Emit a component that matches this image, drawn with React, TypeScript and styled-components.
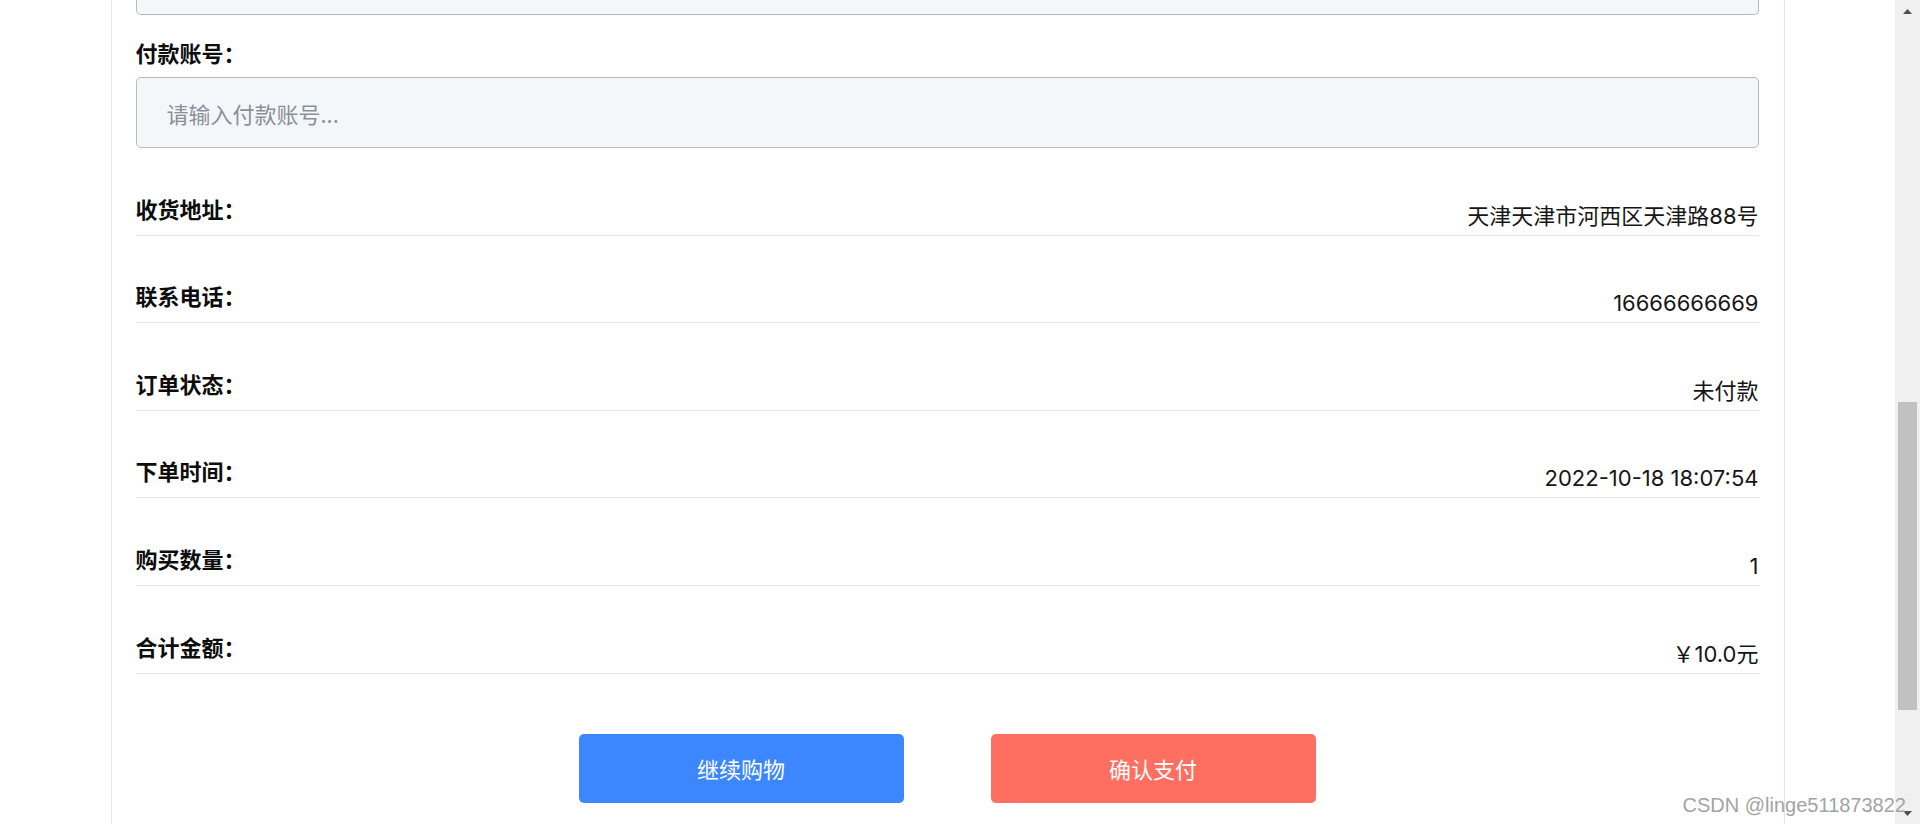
import React from 'react';
import styled, { createGlobalStyle } from 'styled-components';

const GlobalStyle = createGlobalStyle`
  html, body {
    margin: 0;
    padding: 0;
    height: 100%;
    overflow: hidden;
    background: #ffffff;
  }
  body {
    font-family: "Noto Sans CJK SC", sans-serif;
  }
  * {
    box-sizing: border-box;
  }
`;

const Viewport = styled.div`
  position: relative;
  display: flex;
  width: 1920px;
  height: 824px;
  overflow: hidden;
`;

const Page = styled.main`
  flex: 1;
  min-width: 0;
`;

const Panel = styled.section`
  width: 1674px;
  height: 100%;
  margin: 0 auto;
  padding: 0 25px 0 24px;
  border-left: 1px solid #e6e8ec;
  border-right: 1px solid #dfe5ee;
`;

const InputStub = styled.div`
  height: 15px;
  background: #f4f7fa;
  border: 1px solid #b4bac3;
  border-top: none;
  border-radius: 0 0 5px 5px;
`;

const FieldLabel = styled.label`
  display: block;
  margin-top: 22px;
  font: 700 22px/30px "Noto Sans CJK SC", sans-serif;
  color: #0d0d0d;
`;

const TextInput = styled.input`
  display: block;
  width: 100%;
  height: 71px;
  margin-top: 10px;
  padding: 0 30px;
  background: #f4f7fa;
  border: 1px solid #b4bac3;
  border-radius: 5px;
  font: 400 22px "Noto Sans CJK SC", sans-serif;
  color: #333333;
  outline: none;

  &::placeholder {
    color: #8a8f99;
  }
`;

const InfoList = styled.dl`
  margin: 0;
`;

const InfoRow = styled.div`
  display: flex;
  justify-content: space-between;
  align-items: flex-end;
  height: 87.6px;
  padding-bottom: 4px;
  border-bottom: 1px solid #e5e7eb;
`;

const RowLabel = styled.dt`
  margin: 0 0 8px;
  font: 700 22px/30px "Noto Sans CJK SC", sans-serif;
  color: #0d0d0d;
`;

const RowValue = styled.dd`
  margin: 0;
  font: 400 22px/30px Inter, "Noto Sans CJK SC", sans-serif;
  color: #161616;
`;

const Actions = styled.div`
  display: flex;
  justify-content: center;
  gap: 87px;
  padding-top: 60px;
`;

const ActionButton = styled.button<{ $tone: 'primary' | 'danger' }>`
  width: 325px;
  height: 69px;
  border: none;
  border-radius: 5px;
  background: ${(p) => (p.$tone === 'primary' ? '#3d87fe' : '#fe6f62')};
  color: #ffffff;
  font: 400 22px "Noto Sans CJK SC", sans-serif;
  cursor: pointer;
`;

const ScrollBar = styled.div`
  display: flex;
  flex-direction: column;
  width: 25px;
  background: #f0f0f0;
`;

const ScrollArrow = styled.div`
  display: flex;
  align-items: center;
  justify-content: center;
  height: 22px;
`;

const ScrollTrack = styled.div`
  flex: 1;
  padding: 0 3px;
`;

const ScrollThumb = styled.div`
  height: 308px;
  background: #c1c1c1;
`;

const Watermark = styled.div`
  position: absolute;
  right: 14px;
  bottom: 7px;
  font: 400 20px/23px "Liberation Sans", Arial, sans-serif;
  color: #a3a3a3;
  pointer-events: none;
  white-space: nowrap;
`;

const rows: Array<[string, string]> = [
  ['收货地址：', '天津天津市河西区天津路88号'],
  ['联系电话：', '16666666669'],
  ['订单状态：', '未付款'],
  ['下单时间：', '2022-10-18 18:07:54'],
  ['购买数量：', '1'],
  ['合计金额：', '￥10.0元'],
];

const Triangle = ({ up }: { up: boolean }) => (
  <svg width="9" height="5" viewBox="0 0 9 5">
    <path d={up ? 'M0 5 L4.5 0 L9 5 Z' : 'M0 0 L4.5 5 L9 0 Z'} fill="#505050" />
  </svg>
);

export default function App() {
  return (
    <>
      <GlobalStyle />
      <Viewport>
        <Page>
          <Panel>
            <InputStub />
            <FieldLabel htmlFor="pay-account">付款账号：</FieldLabel>
            <TextInput id="pay-account" placeholder="请输入付款账号..." />
            <InfoList>
              {rows.map(([label, value]) => (
                <InfoRow key={label}>
                  <RowLabel>{label}</RowLabel>
                  <RowValue>{value}</RowValue>
                </InfoRow>
              ))}
            </InfoList>
            <Actions>
              <ActionButton $tone="primary">继续购物</ActionButton>
              <ActionButton $tone="danger">确认支付</ActionButton>
            </Actions>
          </Panel>
        </Page>
        <ScrollBar>
          <ScrollArrow>
            <Triangle up />
          </ScrollArrow>
          <ScrollTrack>
            <ScrollThumb style={{ marginTop: 380 }} />
          </ScrollTrack>
          <ScrollArrow>
            <Triangle up={false} />
          </ScrollArrow>
        </ScrollBar>
        <Watermark>CSDN @linge511873822</Watermark>
      </Viewport>
    </>
  );
}
